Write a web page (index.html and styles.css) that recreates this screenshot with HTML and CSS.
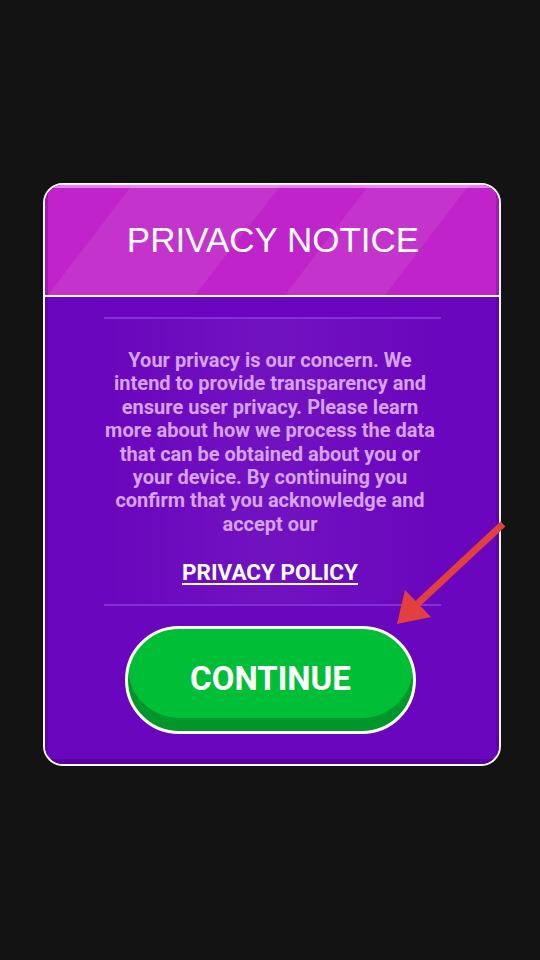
FILE: index.html
```html
<!DOCTYPE html>
<html>
<head>
<meta charset="utf-8">
<link rel="stylesheet" href="styles.css">
</head>
<body>
<div class="card">
  <div class="header">
    <svg class="stripes" width="454" height="110" viewBox="0 0 454 110">
      <polygon points="87,0 236,0 150,110 3,110" fill="#ffffff" fill-opacity="0.08"/>
      <polygon points="324,0 424,0 340,110 240,110" fill="#ffffff" fill-opacity="0.08"/>
    </svg>
    <h1 class="title">PRIVACY NOTICE</h1>
  </div>
  <div class="content">
    <div class="panel">
      <p class="text">Your privacy is our concern. We intend to provide transparency and ensure user privacy. Please learn more about how we process the data that can be obtained about you or your device. By continuing you confirm that you acknowledge and accept our</p>
      <a class="policy" href="#">PRIVACY POLICY</a>
    </div>
    <button class="btn">CONTINUE</button>
  </div>
</div>
<svg class="arrow" width="540" height="960" viewBox="0 0 540 960">
  <line x1="503" y1="524" x2="414" y2="607" stroke="#e2403e" stroke-width="7"/>
  <polygon points="397,624 405,590 431,617" fill="#e2403e"/>
</svg>
</body>
</html>
```
FILE: styles.css
```css
html, body {
  margin: 0;
  padding: 0;
}
body {
  background: #131313;
  width: 540px;
  height: 960px;
  position: relative;
  overflow: hidden;
  font-family: Roboto, "Noto Sans", sans-serif;
}
.card {
  width: 454px;
  margin: 183px 0 0 43px;
  border: 2px solid #ffffff;
  border-radius: 20px;
  overflow: hidden;
  background: #6a06bd;
}
.header {
  position: relative;
  height: 110px;
  background: #bf23c9;
  border-bottom: 2px solid #ffffff;
  box-shadow: inset 0 3px 0 #f07cf4, inset 3px 0 0 #a519ae, inset -3px 0 0 #a519ae;
  display: flex;
  align-items: center;
  justify-content: center;
}
.stripes {
  position: absolute;
  left: 0;
  top: 0;
}
.title {
  position: relative;
  margin: 0 0 0 2px;
  font-family: "Liberation Sans", Arial, sans-serif;
  font-weight: 400;
  font-size: 35px;
  color: #ffffff;
  letter-spacing: 0;
}
.content {
  height: 467px;
  box-sizing: border-box;
  padding-top: 20px;
  box-shadow: inset 0 -5px 0 #5a009e, inset 3px 0 0 #5f02a8, inset -3px 0 0 #5f02a8;
  display: flex;
  flex-direction: column;
  align-items: center;
}
.panel {
  width: 337px;
  border-top: 2px solid #8331d2;
  border-bottom: 2px solid #8331d2;
  background: linear-gradient(90deg, rgba(255,255,255,0) 0%, rgba(255,255,255,0.05) 50%, rgba(255,255,255,0.02) 80%, rgba(255,255,255,0) 100%);
  padding: 30px 0 19px;
  display: flex;
  flex-direction: column;
  align-items: center;
}
.text {
  margin: 0 0 0 -4px;
  width: 334px;
  text-align: center;
  font-weight: 700;
  font-size: 20px;
  line-height: 23.4px;
  color: #d7a3f3;
}
.policy {
  margin: 23px 0 0 -4px;
  font-weight: 700;
  font-size: 22.5px;
  line-height: 26px;
  color: #ffffff;
  text-decoration: underline;
  text-decoration-thickness: 2px;
  text-underline-offset: 3px;
}
.btn {
  margin-top: 20px;
  width: 291px;
  height: 108px;
  border: 3px solid #ffffff;
  border-radius: 54px;
  background: #00bf36;
  box-shadow: inset 0 -13px 0 #00962a;
  color: #ffffff;
  font-family: Roboto, "Noto Sans", sans-serif;
  font-weight: 700;
  font-size: 33px;
  padding: 0 0 4px 0;
  margin-left: -3px;
}
.arrow {
  position: absolute;
  left: 0;
  top: 0;
  pointer-events: none;
}
```
